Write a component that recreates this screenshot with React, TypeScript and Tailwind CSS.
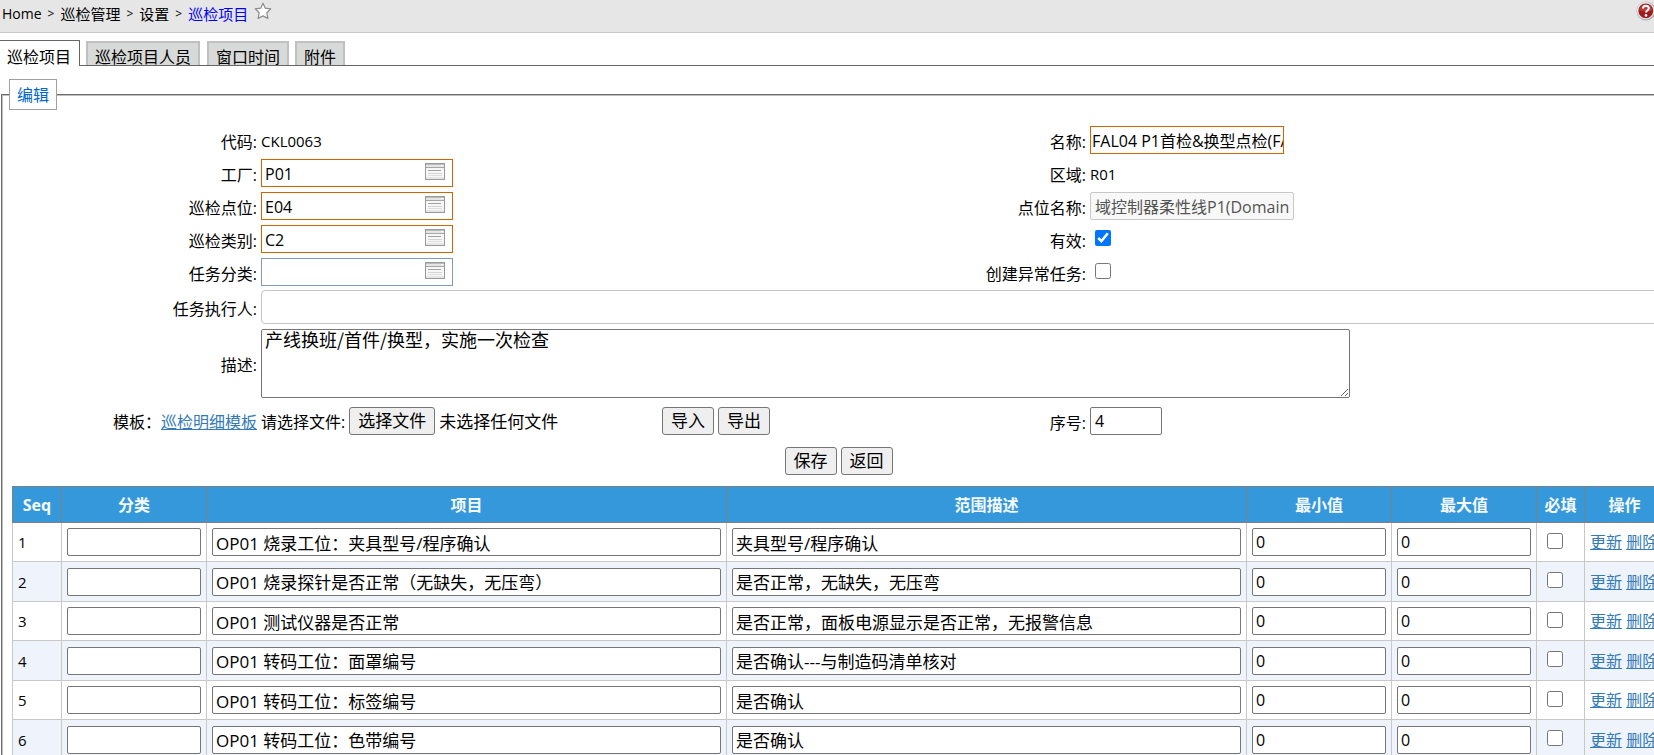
import { useRef, type ReactNode } from "react";

const checks = [
  { seq: 1, item: "OP01 烧录工位：夹具型号/程序确认", range: "夹具型号/程序确认" },
  { seq: 2, item: "OP01 烧录探针是否正常（无缺失，无压弯）", range: "是否正常，无缺失，无压弯" },
  { seq: 3, item: "OP01 测试仪器是否正常", range: "是否正常，面板电源显示是否正常，无报警信息" },
  { seq: 4, item: "OP01 转码工位：面罩编号", range: "是否确认---与制造码清单核对" },
  { seq: 5, item: "OP01 转码工位：标签编号", range: "是否确认" },
  { seq: 6, item: "OP01 转码工位：色带编号", range: "是否确认" },
];

const boxed = "rounded-[2px] border border-[#767676] bg-white";
const cellInput = "block h-7 w-full rounded-[2px] border border-[#767676] bg-white px-[3px]";
const pushButton =
  "h-7 rounded-[3px] border border-[#767676] bg-[#efefef] px-2 text-[17px] leading-6 whitespace-nowrap";
const idleTab = "h-6 border-2 border-b-0 border-[#c0c0c0] bg-[#d8dad9] px-[7px] leading-[28px]";

function StarIcon() {
  return (
    <svg viewBox="0 0 18 18" className="h-[18px] w-[18px]" aria-hidden="true">
      <path
        d="M9 1.2 11.3 6.2 16.8 6.8 12.8 10.7 13.9 16.4 9 13.9 4.1 16.4 5.2 10.7 1.2 6.8 6.7 6.2Z"
        fill="#fff"
        stroke="#8c8c8c"
        strokeWidth="1.2"
        strokeLinejoin="round"
      />
    </svg>
  );
}

function HelpIcon() {
  return (
    <svg viewBox="0 0 20 20" className="h-5 w-5" aria-hidden="true">
      <circle cx="10" cy="10" r="9.5" fill="#a9acb0" />
      <circle cx="9.6" cy="9.6" r="8.8" fill="#e4e6e8" />
      <circle cx="9.8" cy="9.8" r="7.4" fill="#a01c1c" />
      <path d="M3 9A7 7 0 0 1 16.6 9Q10 12 3 9Z" fill="#c04a48" opacity=".7" />
      <path
        d="M7 7.6C7 5.7 8.2 4.8 9.9 4.8S12.8 5.8 12.8 7.3C12.8 9.2 10 9.3 10 11.6"
        fill="none"
        stroke="#fff"
        strokeWidth="2"
      />
      <circle cx="10" cy="14.4" r="1.3" fill="#fff" />
    </svg>
  );
}

function WindowIcon() {
  return (
    <svg viewBox="0 0 20 17" className="h-[17px] w-5" aria-hidden="true">
      <rect x=".5" y=".5" width="19" height="16" fill="#f7f7f7" stroke="#9a9a9a" />
      <rect x="1" y="1" width="18" height="1" fill="#b9bcb9" />
      <rect x="1" y="2" width="18" height="2" fill="#e3e6e3" />
      <rect x="16" y="2" width="2" height="1" fill="#fff" />
      <rect x="1" y="4" width="18" height="1" fill="#a6a6a6" />
      <rect x="3" y="7" width="13" height="1" fill="#a2a2a2" />
      <rect x="3" y="10" width="14" height="1" fill="#d4d4d4" />
      <rect x="3" y="12" width="14" height="1" fill="#dedede" />
      <rect x="1" y="14" width="18" height="2" fill="#e6e6e6" />
    </svg>
  );
}

function Field({ id, label, children }: { id?: string; label: string; children: ReactNode }) {
  return (
    <div className="flex min-h-7 items-center gap-1">
      <label htmlFor={id} className="w-[254px] shrink-0 pt-[3px] text-right">
        {label}:
      </label>
      {children}
    </div>
  );
}

function Lookup({ id, value, required }: { id: string; value: string; required?: boolean }) {
  return (
    <div
      className={`flex h-7 w-48 items-start border bg-white pr-[7px] ${required ? "border-[#cc6600]" : "border-[#7f9db9]"}`}
    >
      <input id={id} defaultValue={value} className="h-[26px] min-w-0 flex-1 pt-[2px] pl-[3px] outline-none" />
      <button type="button" aria-label="选择" className="mt-[3px]">
        <WindowIcon />
      </button>
    </div>
  );
}

export default function App() {
  const file = useRef<HTMLInputElement>(null);

  return (
    <div className="overflow-hidden bg-white font-['Open_Sans','Noto_Sans_CJK_SC',sans-serif] text-base leading-6 text-black">
      <header className="flex h-[33px] items-start justify-between border-b border-[#c8c8c8] bg-[#e6e6e6]">
        <nav className="flex items-center gap-[6px] pt-[2px] pl-[2px] text-[15px]">
          <a href="#home" className="text-sm leading-6">Home</a>
          <span className="text-xs leading-6">&gt;</span>
          <a href="#manage">巡检管理</a>
          <span className="text-xs leading-6">&gt;</span>
          <a href="#settings">设置</a>
          <span className="text-xs leading-6">&gt;</span>
          <a href="#items" className="text-[#0000ff]">巡检项目</a>
          <button type="button" aria-label="收藏" className="self-start">
            <StarIcon />
          </button>
        </nav>
        <button type="button" aria-label="帮助" className="-mr-[2px] mt-px">
          <HelpIcon />
        </button>
      </header>

      <nav className="flex h-[33px] items-end border-b border-[#666]">
        <a href="#tab-items" className="-mb-px h-[26px] border-t border-r border-[#666] bg-white pr-2 pl-[7px] leading-[32px]">
          巡检项目
        </a>
        <a href="#tab-people" className={`${idleTab} ml-[6px]`}>巡检项目人员</a>
        <a href="#tab-window" className={`${idleTab} ml-[7px]`}>窗口时间</a>
        <a href="#tab-files" className={`${idleTab} ml-[6px]`}>附件</a>
      </nav>

      <fieldset className="mt-[13px] ml-px min-w-[1675px] border-2 border-b-0 border-[#c0c0c0] [border-style:groove]">
        <legend className="ml-[6px] border border-[#a0a0a0] px-[7px] pt-[2px] leading-[27px] text-[#0066cc]">编辑</legend>

        <div className="grid grid-cols-[829px_1fr] gap-y-[5px] pt-4">
          <Field label="代码">
            <span className="pt-[2px] text-[15px]">CKL0063</span>
          </Field>
          <Field id="name" label="名称">
            <input
              id="name"
              defaultValue="FAL04 P1首检&换型点检(FAL04)"
              className="h-7 w-[194px] border border-[#cc6600] pl-px"
            />
          </Field>
          <Field id="plant" label="工厂">
            <Lookup id="plant" value="P01" required />
          </Field>
          <Field label="区域">
            <span className="pt-[2px] text-[15px]">R01</span>
          </Field>
          <Field id="point" label="巡检点位">
            <Lookup id="point" value="E04" required />
          </Field>
          <Field id="pointName" label="点位名称">
            <input
              id="pointName"
              disabled
              defaultValue="域控制器柔性线P1(Domain)"
              className="h-7 w-[204px] rounded-[2px] border border-[#c8c8c8] bg-[#f8f8f8] px-1 text-[#545454]"
            />
          </Field>
          <Field id="kind" label="巡检类别">
            <Lookup id="kind" value="C2" required />
          </Field>
          <Field id="active" label="有效">
            <input id="active" type="checkbox" defaultChecked className="mb-[2px] ml-[5px] h-4 w-4" />
          </Field>
          <Field id="taskKind" label="任务分类">
            <Lookup id="taskKind" value="" />
          </Field>
          <Field id="createTask" label="创建异常任务">
            <input id="createTask" type="checkbox" className="mb-[2px] ml-[5px] h-4 w-4" />
          </Field>
        </div>

        <div className="flex flex-col gap-[5px] pt-1">
          <Field id="assignee" label="任务执行人">
            <input id="assignee" className="h-[34px] flex-1 rounded border border-[#c4c4c4] px-1" />
          </Field>
          <Field id="desc" label="描述">
            <textarea
              id="desc"
              defaultValue="产线换班/首件/换型，实施一次检查"
              className={`${boxed} h-[69px] w-[1089px] resize px-[3px] font-['Noto_Sans_CJK_SC',monospace] text-lg leading-[18px]`}
            />
          </Field>
        </div>

        <div className="grid grid-cols-[829px_1fr] pt-[9px]">
          <div className="flex h-7 items-center gap-1">
            <div className="w-[254px] pt-[2px] text-right">
              模板：
              <a href="#template" className="text-[#337ab7] underline">巡检明细模板</a>
            </div>
            <label htmlFor="file" className="pt-[2px]">请选择文件:</label>
            <input ref={file} id="file" type="file" className="hidden" />
            <button type="button" className={pushButton} onClick={() => file.current?.click()}>
              选择文件
            </button>
            <span className="pt-[2px] text-[17px]">未选择任何文件</span>
            <div className="ml-auto flex gap-1 pr-[62px]">
              <button type="button" className={pushButton}>导入</button>
              <button type="button" className={pushButton}>导出</button>
            </div>
          </div>
          <Field id="order" label="序号">
            <input id="order" defaultValue="4" className={`${boxed} h-7 w-[72px] px-[4px]`} />
          </Field>
        </div>

        <div className="flex justify-center gap-1 pt-3 pb-[11px]">
          <button type="button" className={pushButton}>保存</button>
          <button type="button" className={pushButton}>返回</button>
        </div>

        <div className="px-[9px]">
          <table className="w-full table-fixed border-collapse">
            <colgroup>
              <col className="w-[49px]" />
              <col className="w-[145px]" />
              <col className="w-[520px]" />
              <col className="w-[520px]" />
              <col className="w-[145px]" />
              <col className="w-[145px]" />
              <col className="w-12" />
              <col />
            </colgroup>
            <thead>
              <tr className="h-9 bg-[#3498db] text-[#f4f8fc] [&>th]:border [&>th]:border-[#808080] [&>th]:font-bold">
                <th scope="col">Seq</th>
                <th scope="col">分类</th>
                <th scope="col">项目</th>
                <th scope="col">范围描述</th>
                <th scope="col">最小值</th>
                <th scope="col">最大值</th>
                <th scope="col" className="whitespace-nowrap">必填</th>
                <th scope="col">操作</th>
              </tr>
            </thead>
            <tbody>
              {checks.map((row) => (
                <tr
                  key={row.seq}
                  className="h-[39px] even:h-10 even:bg-[#eef3fc] [&>td]:border [&>td]:border-[#c8c8c8] [&>td]:px-[5px]"
                >
                  <td className="text-[15px]">{row.seq}</td>
                  <td>
                    <input aria-label="分类" className={`${cellInput} text-[17px]`} />
                  </td>
                  <td>
                    <input aria-label="项目" defaultValue={row.item} className={`${cellInput} text-[17px]`} />
                  </td>
                  <td>
                    <input aria-label="范围描述" defaultValue={row.range} className={`${cellInput} text-[17px]`} />
                  </td>
                  <td>
                    <input aria-label="最小值" defaultValue="0" className={cellInput} />
                  </td>
                  <td>
                    <input aria-label="最大值" defaultValue="0" className={cellInput} />
                  </td>
                  <td>
                    <input type="checkbox" aria-label="必填" className="mb-[3px] ml-[5px] block h-4 w-4" />
                  </td>
                  <td className="whitespace-nowrap">
                    <a href="#update" className="text-[#337ab7] underline">更新</a>{" "}
                    <a href="#delete" className="text-[#337ab7] underline">删除</a>
                  </td>
                </tr>
              ))}
            </tbody>
          </table>
        </div>
      </fieldset>
    </div>
  );
}
